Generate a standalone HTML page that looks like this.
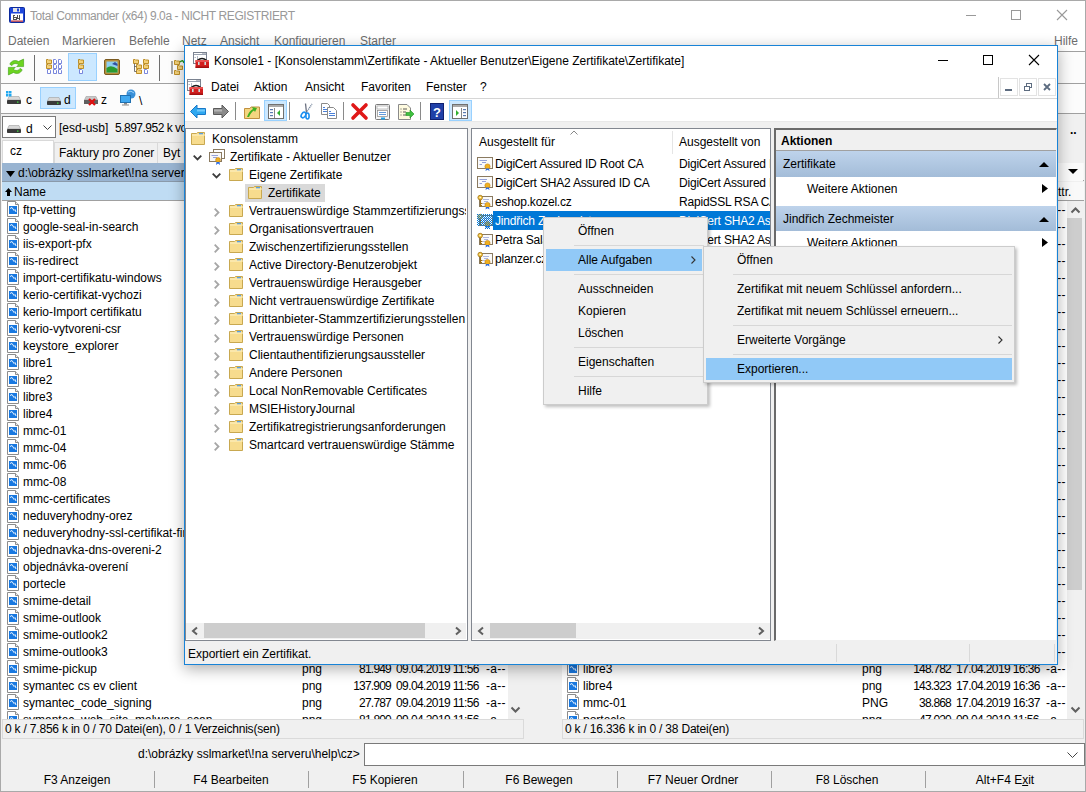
<!DOCTYPE html><html><head><meta charset="utf-8"><style>
html,body{margin:0;padding:0}
body{width:1086px;height:792px;overflow:hidden;position:relative;background:#f0f0f0;font-family:"Liberation Sans",sans-serif;font-size:12px;color:#000}
div{position:absolute;box-sizing:border-box}
.t{white-space:pre;line-height:14px}
svg{overflow:visible}
</style></head><body>
<div style="left:0px;top:0px;width:1086px;height:792px;background:#f0f0f0;border:1px solid #a9a9a9"></div>
<div style="left:1px;top:1px;width:1084px;height:30px;background:#fff"></div>
<div style="left:1px;top:31px;width:1084px;height:20px;background:#fff"></div>
<div style="left:1px;top:51px;width:1084px;height:1px;background:#a0a0a0"></div>
<div style="left:1px;top:52px;width:1084px;height:31px;background:#fcfcfc"></div>
<div style="left:1px;top:83px;width:1084px;height:1px;background:#a0a0a0"></div>
<div style="left:1px;top:84px;width:1084px;height:29px;background:#fcfcfc"></div>
<div style="left:1px;top:113px;width:1084px;height:1px;background:#a0a0a0"></div>
<svg style="position:absolute;left:9px;top:7px" width="16" height="16" viewBox="0 0 16 16"><rect x="0.5" y="0.5" width="15" height="15" rx="1" fill="#1f48dc" stroke="#0c2a9c"/><rect x="4" y="1" width="7" height="4" fill="#e4e4e4"/><rect x="8" y="1.5" width="2" height="3" fill="#1f48dc"/><rect x="2" y="6.5" width="12" height="8" fill="#fff"/><rect x="2" y="13.5" width="12" height="1.2" fill="#c03030"/><g shape-rendering="crispEdges" stroke="#505050" stroke-width="1" fill="none"><path d="M6,8.5H4.5V12.5H7V10.5H4.5M8.5,8V11H11M10.5,8V13"/></g></svg>
<div class="t" style="left:30px;top:9px;font-size:12px;color:#999;letter-spacing:-0.4px">Total Commander (x64) 9.0a - NICHT REGISTRIERT</div>
<svg style="position:absolute;left:966px;top:15px" width="10" height="1" viewBox="0 0 10 1"><rect x="0" y="0" width="10" height="1" fill="#999"/></svg>
<svg style="position:absolute;left:1011px;top:10px" width="10" height="10" viewBox="0 0 10 10"><rect x="0.5" y="0.5" width="9" height="9" fill="none" stroke="#999"/></svg>
<svg style="position:absolute;left:1057px;top:10px" width="10" height="10" viewBox="0 0 10 10"><path d="M0,0L10,10M10,0L0,10" stroke="#999" stroke-width="1.1"/></svg>
<div class="t" style="left:8px;top:34px;font-size:12px;color:#6d6d6d">Dateien</div>
<div class="t" style="left:62px;top:34px;font-size:12px;color:#6d6d6d">Markieren</div>
<div class="t" style="left:129px;top:34px;font-size:12px;color:#6d6d6d">Befehle</div>
<div class="t" style="left:182px;top:34px;font-size:12px;color:#6d6d6d">Netz</div>
<div class="t" style="left:220px;top:34px;font-size:12px;color:#6d6d6d">Ansicht</div>
<div class="t" style="left:274px;top:34px;font-size:12px;color:#6d6d6d">Konfigurieren</div>
<div class="t" style="left:360px;top:34px;font-size:12px;color:#6d6d6d">Starter</div>
<div class="t" style="left:1054px;top:34px;font-size:12px;color:#6d6d6d">Hilfe</div>
<div style="left:68px;top:53px;width:29px;height:28px;background:#cce8ff;border:1px solid #99d1ff"></div>
<div style="left:34px;top:55px;width:1px;height:26px;background:#6e6e6e"></div>
<div style="left:159px;top:55px;width:1px;height:26px;background:#6e6e6e"></div>
<svg style="position:absolute;left:8px;top:59px" width="16" height="16" viewBox="0 0 16 16"><g fill="#6cd420" stroke="#3c9c12" stroke-width="0.6" stroke-linejoin="miter"><path d="M1.8,5.2 C3.5,1.5 7,0.6 10.5,2.5 L15.6,0.1 L15.6,7.6 L8.6,7.6 L10.8,5.8 C8.5,3.9 5.5,4.1 3.9,6.6 Z"/><path d="M14.2,10.8 C12.5,14.5 9,15.4 5.5,13.5 L0.4,15.9 L0.4,8.4 L7.4,8.4 L5.2,10.2 C7.5,12.1 10.5,11.9 12.1,9.4 Z"/></g></svg>
<svg style="position:absolute;left:46px;top:59px" width="16" height="16" viewBox="0 0 16 16"><path d="M0.5,0.5 H2 L2.5,1 H5.5 V4.5 H0.5 Z" fill="#f4d27a" stroke="#b8861a" stroke-width="0.9"/><path d="M0.5,5.5 H2 L2.5,6 H5.5 V9.5 H0.5 Z" fill="#f4d27a" stroke="#b8861a" stroke-width="0.9"/><path d="M1.5,10.5 H3.5 L4.5,11.5 V14.5 H1.5 Z" fill="#fff" stroke="#6a78d8" stroke-width="0.9"/><path d="M7.5,0.5 H9.5 L10.5,1.5 V4.5 H7.5 Z" fill="#fff" stroke="#6a78d8" stroke-width="0.9"/><path d="M7.5,5.5 H9.5 L10.5,6.5 V9.5 H7.5 Z" fill="#fff" stroke="#6a78d8" stroke-width="0.9"/><path d="M7.5,10.5 H9.5 L10.5,11.5 V14.5 H7.5 Z" fill="#fff" stroke="#6a78d8" stroke-width="0.9"/><path d="M12.5,0.5 H14.5 L15.5,1.5 V4.5 H12.5 Z" fill="#fff" stroke="#6a78d8" stroke-width="0.9"/><path d="M12.5,5.5 H14.5 L15.5,6.5 V9.5 H12.5 Z" fill="#fff" stroke="#6a78d8" stroke-width="0.9"/><path d="M12.5,10.5 H14.5 L15.5,11.5 V14.5 H12.5 Z" fill="#fff" stroke="#6a78d8" stroke-width="0.9"/></svg>
<svg style="position:absolute;left:78px;top:59px" width="8" height="16" viewBox="0 0 8 16"><path d="M0.5,0.5 H2 L2.5,1 H5.5 V4.5 H0.5 Z" fill="#f4d27a" stroke="#b8861a" stroke-width="0.9"/><path d="M0.5,5.5 H2 L2.5,6 H5.5 V9.5 H0.5 Z" fill="#f4d27a" stroke="#b8861a" stroke-width="0.9"/><path d="M1.5,10.5 H3.5 L4.5,11.5 V14.5 H1.5 Z" fill="#fff" stroke="#6a78d8" stroke-width="0.9"/></svg>
<svg style="position:absolute;left:104px;top:59px" width="16" height="16" viewBox="0 0 16 16"><rect x="0.5" y="0.5" width="15" height="15" rx="1.5" fill="#b8903a" stroke="#7a5a20"/><rect x="2.5" y="2.5" width="11" height="11" fill="#8fd0f0"/><path d="M2.5,13.5 L2.5,9 Q7,5 13.5,10 L13.5,13.5Z" fill="#2a9a30"/><path d="M8,5 L11,3 L13.5,5 L13.5,7Z" fill="#3050a0"/></svg>
<svg style="position:absolute;left:133px;top:59px" width="16" height="16" viewBox="0 0 16 16"><path d="M0.5,0.5 H2 L2.5,1 H5.5 V4.5 H0.5 Z" fill="#f4d27a" stroke="#b8861a" stroke-width="0.9"/><path d="M3.5,5.5 H5 L5.5,6 H8.5 V9.5 H3.5 Z" fill="#f4d27a" stroke="#b8861a" stroke-width="0.9"/><path d="M3.5,10.5 H5 L5.5,11 H8.5 V14.5 H3.5 Z" fill="#f4d27a" stroke="#b8861a" stroke-width="0.9"/><path d="M1.5,4.5V12.5H3.5M1.5,7.5H3.5" stroke="#555" fill="none" stroke-width="0.8"/><path d="M10.5,0.5 H12 L12.5,1 H15.5 V4.5 H10.5 Z" fill="#f4d27a" stroke="#b8861a" stroke-width="0.9"/><path d="M10.5,5.5 H12 L12.5,6 H15.5 V9.5 H10.5 Z" fill="#f4d27a" stroke="#b8861a" stroke-width="0.9"/><path d="M11.5,10.5 H13.5 L14.5,11.5 V14.5 H11.5 Z" fill="#fff" stroke="#6a78d8" stroke-width="0.9"/></svg>
<svg style="position:absolute;left:171px;top:59px" width="14" height="16" viewBox="0 0 14 16"><path d="M1,2V15" stroke="#555" stroke-width="1"/><path d="M3.5,1.5 H5 L5.5,2 H8.5 V5.5 H3.5 Z" fill="#f4d27a" stroke="#b8861a" stroke-width="0.9"/><path d="M6.5,6.5 H8 L8.5,7 H11.5 V10.5 H6.5 Z" fill="#f4d27a" stroke="#b8861a" stroke-width="0.9"/><path d="M3.5,11.5 H5 L5.5,12 H8.5 V15.5 H3.5 Z" fill="#f4d27a" stroke="#b8861a" stroke-width="0.9"/><path d="M9,3 Q12,0 13,4" stroke="#2a9a20" stroke-width="1.5" fill="none"/></svg>
<div style="left:40px;top:87px;width:36px;height:22px;background:#cce8ff;border:1px solid #99d1ff"></div>
<svg style="position:absolute;left:6px;top:91px" width="16" height="16" viewBox="0 0 16 16"><path d="M1.5,9 L3,5.5 H13 L14.5,9Z" fill="#d8d8d8" stroke="#a0a0a0" stroke-width="0.6"/><rect x="1" y="9" width="14" height="4" rx="0.8" fill="#3a3a3a"/><rect x="11" y="10.5" width="1.5" height="1.2" fill="#40e040"/><rect x="0" y="0" width="2.5" height="2.5" fill="#20a8f0"/><rect x="3" y="0" width="2.5" height="2.5" fill="#20a8f0"/><rect x="0" y="3" width="2.5" height="2.5" fill="#20a8f0"/><rect x="3" y="3" width="2.5" height="2.5" fill="#20a8f0"/></svg>
<div class="t" style="left:26px;top:93px;font-size:12px;">c</div>
<svg style="position:absolute;left:46px;top:92px" width="16" height="16" viewBox="0 0 16 16"><path d="M1.5,9 L3,5.5 H13 L14.5,9Z" fill="#d8d8d8" stroke="#a0a0a0" stroke-width="0.6"/><rect x="1" y="9" width="14" height="4" rx="0.8" fill="#3a3a3a"/><rect x="11" y="10.5" width="1.5" height="1.2" fill="#40e040"/></svg>
<div class="t" style="left:64px;top:93px;font-size:12px;">d</div>
<svg style="position:absolute;left:83px;top:91px" width="16" height="16" viewBox="0 0 16 16"><path d="M1.5,9 L3,5.5 H13 L14.5,9Z" fill="#c8c8c8" stroke="#a0a0a0" stroke-width="0.6"/><rect x="1" y="9" width="14" height="4" fill="#606060"/><path d="M6,8 L12,14 M12,8 L6,14" stroke="#e01010" stroke-width="2.2"/></svg>
<div class="t" style="left:101px;top:93px;font-size:12px;">z</div>
<svg style="position:absolute;left:120px;top:89px" width="16" height="18" viewBox="0 0 16 18"><circle cx="11" cy="5" r="4.5" fill="#3a90d8"/><path d="M8,3 Q11,1 14,4" stroke="#9ad0f8" fill="none"/><rect x="0.5" y="6.5" width="10" height="7" fill="#40a8f0" stroke="#2070b0"/><rect x="4" y="14" width="3" height="1.5" fill="#888"/><rect x="2" y="15.5" width="7" height="1" fill="#888"/></svg>
<div class="t" style="left:139px;top:94px;font-size:12px;">\</div>
<div style="left:2px;top:116px;width:54px;height:22px;background:#fff;border:1px solid #7a7a7a"></div>
<svg style="position:absolute;left:6px;top:120px" width="16" height="16" viewBox="0 0 16 16"><path d="M1.5,9 L3,5.5 H13 L14.5,9Z" fill="#d8d8d8" stroke="#a0a0a0" stroke-width="0.6"/><rect x="1" y="9" width="14" height="4" rx="0.8" fill="#3a3a3a"/><rect x="11" y="10.5" width="1.5" height="1.2" fill="#40e040"/></svg>
<div class="t" style="left:26px;top:122px;font-size:12px;">d</div>
<svg style="position:absolute;left:43px;top:125px" width="9" height="5" viewBox="0 0 9 5"><path d="M0.5,0.5 L4.5,4.5 L8.5,0.5" stroke="#444" fill="none" stroke-width="1"/></svg>
<div class="t" style="left:59px;top:121px;font-size:12px;">[esd-usb]</div>
<div class="t" style="left:115px;top:121px;font-size:12px;letter-spacing:-0.5px">5.897.952 k von 30.518.652 k frei</div>
<div class="t" style="left:1070px;top:123px;font-size:12px;font-weight:bold">..</div>
<div style="left:2px;top:140px;width:52px;height:23px;background:#fff;border:1px solid #d9d9d9;border-bottom:none"></div>
<div class="t" style="left:10px;top:144px;font-size:12px;">cz</div>
<div style="left:54px;top:142px;width:104px;height:21px;background:#f0f0f0;border:1px solid #d9d9d9;border-bottom:none"></div>
<div class="t" style="left:59px;top:146px;font-size:12px;">Faktury pro Zoner</div>
<div style="left:157px;top:142px;width:60px;height:21px;background:#f0f0f0;border:1px solid #d9d9d9;border-bottom:none"></div>
<div class="t" style="left:163px;top:146px;font-size:12px;">Byt</div>
<div style="left:2px;top:163px;width:522px;height:18px;background:#99b4d1"></div>
<div style="left:2px;top:181px;width:522px;height:1px;background:#8a9aaa"></div>
<svg style="position:absolute;left:6px;top:171px" width="9" height="6" viewBox="0 0 9 6"><path d="M0,0H9L4.5,6Z" fill="#000"/></svg>
<div class="t" style="left:18px;top:166px;font-size:12px;">d:\obrázky sslmarket\!na serveru\help\cz\*.*</div>
<div style="left:2px;top:182px;width:522px;height:18px;background:#bfdcf3"></div>
<div style="left:2px;top:200px;width:522px;height:1px;background:#a0a0a0"></div>
<svg style="position:absolute;left:5px;top:188px" width="7" height="8" viewBox="0 0 7 8"><path d="M3.5,0 L7,4 H5 V8 H2 V4 H0Z" fill="#000"/></svg>
<div class="t" style="left:14px;top:185px;font-size:12px;">Name</div>
<div style="left:2px;top:201px;width:506px;height:518px;background:#fff"></div>
<div style="left:2px;top:201px;width:506px;height:518px;overflow:hidden">
<svg style="position:absolute;left:5px;top:0px" width="12" height="16" viewBox="0 0 12 16"><path d="M0.5,0.5 H8.5 L11.5,3.5 V15.5 H0.5Z" fill="#fff" stroke="#8c8c8c"/><path d="M8.5,0.5 V3.5 H11.5" fill="#eee" stroke="#8c8c8c"/><rect x="2" y="5" width="8" height="8" fill="#1878e0"/><path d="M3,7.5 L5,6.5 L7,9.5 L8,8.5 L9,11" stroke="#e8f4ff" stroke-width="1" fill="none"/></svg>
<div class="t" style="left:21px;top:2px">ftp-vetting</div>
<svg style="position:absolute;left:5px;top:17px" width="12" height="16" viewBox="0 0 12 16"><path d="M0.5,0.5 H8.5 L11.5,3.5 V15.5 H0.5Z" fill="#fff" stroke="#8c8c8c"/><path d="M8.5,0.5 V3.5 H11.5" fill="#eee" stroke="#8c8c8c"/><rect x="2" y="5" width="8" height="8" fill="#1878e0"/><path d="M3,7.5 L5,6.5 L7,9.5 L8,8.5 L9,11" stroke="#e8f4ff" stroke-width="1" fill="none"/></svg>
<div class="t" style="left:21px;top:19px">google-seal-in-search</div>
<svg style="position:absolute;left:5px;top:34px" width="12" height="16" viewBox="0 0 12 16"><path d="M0.5,0.5 H8.5 L11.5,3.5 V15.5 H0.5Z" fill="#fff" stroke="#8c8c8c"/><path d="M8.5,0.5 V3.5 H11.5" fill="#eee" stroke="#8c8c8c"/><rect x="2" y="5" width="8" height="8" fill="#1878e0"/><path d="M3,7.5 L5,6.5 L7,9.5 L8,8.5 L9,11" stroke="#e8f4ff" stroke-width="1" fill="none"/></svg>
<div class="t" style="left:21px;top:36px">iis-export-pfx</div>
<svg style="position:absolute;left:5px;top:51px" width="12" height="16" viewBox="0 0 12 16"><path d="M0.5,0.5 H8.5 L11.5,3.5 V15.5 H0.5Z" fill="#fff" stroke="#8c8c8c"/><path d="M8.5,0.5 V3.5 H11.5" fill="#eee" stroke="#8c8c8c"/><rect x="2" y="5" width="8" height="8" fill="#1878e0"/><path d="M3,7.5 L5,6.5 L7,9.5 L8,8.5 L9,11" stroke="#e8f4ff" stroke-width="1" fill="none"/></svg>
<div class="t" style="left:21px;top:53px">iis-redirect</div>
<svg style="position:absolute;left:5px;top:68px" width="12" height="16" viewBox="0 0 12 16"><path d="M0.5,0.5 H8.5 L11.5,3.5 V15.5 H0.5Z" fill="#fff" stroke="#8c8c8c"/><path d="M8.5,0.5 V3.5 H11.5" fill="#eee" stroke="#8c8c8c"/><rect x="2" y="5" width="8" height="8" fill="#1878e0"/><path d="M3,7.5 L5,6.5 L7,9.5 L8,8.5 L9,11" stroke="#e8f4ff" stroke-width="1" fill="none"/></svg>
<div class="t" style="left:21px;top:70px">import-certifikatu-windows</div>
<svg style="position:absolute;left:5px;top:85px" width="12" height="16" viewBox="0 0 12 16"><path d="M0.5,0.5 H8.5 L11.5,3.5 V15.5 H0.5Z" fill="#fff" stroke="#8c8c8c"/><path d="M8.5,0.5 V3.5 H11.5" fill="#eee" stroke="#8c8c8c"/><rect x="2" y="5" width="8" height="8" fill="#1878e0"/><path d="M3,7.5 L5,6.5 L7,9.5 L8,8.5 L9,11" stroke="#e8f4ff" stroke-width="1" fill="none"/></svg>
<div class="t" style="left:21px;top:87px">kerio-certifikat-vychozi</div>
<svg style="position:absolute;left:5px;top:102px" width="12" height="16" viewBox="0 0 12 16"><path d="M0.5,0.5 H8.5 L11.5,3.5 V15.5 H0.5Z" fill="#fff" stroke="#8c8c8c"/><path d="M8.5,0.5 V3.5 H11.5" fill="#eee" stroke="#8c8c8c"/><rect x="2" y="5" width="8" height="8" fill="#1878e0"/><path d="M3,7.5 L5,6.5 L7,9.5 L8,8.5 L9,11" stroke="#e8f4ff" stroke-width="1" fill="none"/></svg>
<div class="t" style="left:21px;top:104px">kerio-Import certifikatu</div>
<svg style="position:absolute;left:5px;top:119px" width="12" height="16" viewBox="0 0 12 16"><path d="M0.5,0.5 H8.5 L11.5,3.5 V15.5 H0.5Z" fill="#fff" stroke="#8c8c8c"/><path d="M8.5,0.5 V3.5 H11.5" fill="#eee" stroke="#8c8c8c"/><rect x="2" y="5" width="8" height="8" fill="#1878e0"/><path d="M3,7.5 L5,6.5 L7,9.5 L8,8.5 L9,11" stroke="#e8f4ff" stroke-width="1" fill="none"/></svg>
<div class="t" style="left:21px;top:121px">kerio-vytvoreni-csr</div>
<svg style="position:absolute;left:5px;top:136px" width="12" height="16" viewBox="0 0 12 16"><path d="M0.5,0.5 H8.5 L11.5,3.5 V15.5 H0.5Z" fill="#fff" stroke="#8c8c8c"/><path d="M8.5,0.5 V3.5 H11.5" fill="#eee" stroke="#8c8c8c"/><rect x="2" y="5" width="8" height="8" fill="#1878e0"/><path d="M3,7.5 L5,6.5 L7,9.5 L8,8.5 L9,11" stroke="#e8f4ff" stroke-width="1" fill="none"/></svg>
<div class="t" style="left:21px;top:138px">keystore_explorer</div>
<svg style="position:absolute;left:5px;top:153px" width="12" height="16" viewBox="0 0 12 16"><path d="M0.5,0.5 H8.5 L11.5,3.5 V15.5 H0.5Z" fill="#fff" stroke="#8c8c8c"/><path d="M8.5,0.5 V3.5 H11.5" fill="#eee" stroke="#8c8c8c"/><rect x="2" y="5" width="8" height="8" fill="#1878e0"/><path d="M3,7.5 L5,6.5 L7,9.5 L8,8.5 L9,11" stroke="#e8f4ff" stroke-width="1" fill="none"/></svg>
<div class="t" style="left:21px;top:155px">libre1</div>
<svg style="position:absolute;left:5px;top:170px" width="12" height="16" viewBox="0 0 12 16"><path d="M0.5,0.5 H8.5 L11.5,3.5 V15.5 H0.5Z" fill="#fff" stroke="#8c8c8c"/><path d="M8.5,0.5 V3.5 H11.5" fill="#eee" stroke="#8c8c8c"/><rect x="2" y="5" width="8" height="8" fill="#1878e0"/><path d="M3,7.5 L5,6.5 L7,9.5 L8,8.5 L9,11" stroke="#e8f4ff" stroke-width="1" fill="none"/></svg>
<div class="t" style="left:21px;top:172px">libre2</div>
<svg style="position:absolute;left:5px;top:187px" width="12" height="16" viewBox="0 0 12 16"><path d="M0.5,0.5 H8.5 L11.5,3.5 V15.5 H0.5Z" fill="#fff" stroke="#8c8c8c"/><path d="M8.5,0.5 V3.5 H11.5" fill="#eee" stroke="#8c8c8c"/><rect x="2" y="5" width="8" height="8" fill="#1878e0"/><path d="M3,7.5 L5,6.5 L7,9.5 L8,8.5 L9,11" stroke="#e8f4ff" stroke-width="1" fill="none"/></svg>
<div class="t" style="left:21px;top:189px">libre3</div>
<svg style="position:absolute;left:5px;top:204px" width="12" height="16" viewBox="0 0 12 16"><path d="M0.5,0.5 H8.5 L11.5,3.5 V15.5 H0.5Z" fill="#fff" stroke="#8c8c8c"/><path d="M8.5,0.5 V3.5 H11.5" fill="#eee" stroke="#8c8c8c"/><rect x="2" y="5" width="8" height="8" fill="#1878e0"/><path d="M3,7.5 L5,6.5 L7,9.5 L8,8.5 L9,11" stroke="#e8f4ff" stroke-width="1" fill="none"/></svg>
<div class="t" style="left:21px;top:206px">libre4</div>
<svg style="position:absolute;left:5px;top:221px" width="12" height="16" viewBox="0 0 12 16"><path d="M0.5,0.5 H8.5 L11.5,3.5 V15.5 H0.5Z" fill="#fff" stroke="#8c8c8c"/><path d="M8.5,0.5 V3.5 H11.5" fill="#eee" stroke="#8c8c8c"/><rect x="2" y="5" width="8" height="8" fill="#1878e0"/><path d="M3,7.5 L5,6.5 L7,9.5 L8,8.5 L9,11" stroke="#e8f4ff" stroke-width="1" fill="none"/></svg>
<div class="t" style="left:21px;top:223px">mmc-01</div>
<svg style="position:absolute;left:5px;top:238px" width="12" height="16" viewBox="0 0 12 16"><path d="M0.5,0.5 H8.5 L11.5,3.5 V15.5 H0.5Z" fill="#fff" stroke="#8c8c8c"/><path d="M8.5,0.5 V3.5 H11.5" fill="#eee" stroke="#8c8c8c"/><rect x="2" y="5" width="8" height="8" fill="#1878e0"/><path d="M3,7.5 L5,6.5 L7,9.5 L8,8.5 L9,11" stroke="#e8f4ff" stroke-width="1" fill="none"/></svg>
<div class="t" style="left:21px;top:240px">mmc-04</div>
<svg style="position:absolute;left:5px;top:255px" width="12" height="16" viewBox="0 0 12 16"><path d="M0.5,0.5 H8.5 L11.5,3.5 V15.5 H0.5Z" fill="#fff" stroke="#8c8c8c"/><path d="M8.5,0.5 V3.5 H11.5" fill="#eee" stroke="#8c8c8c"/><rect x="2" y="5" width="8" height="8" fill="#1878e0"/><path d="M3,7.5 L5,6.5 L7,9.5 L8,8.5 L9,11" stroke="#e8f4ff" stroke-width="1" fill="none"/></svg>
<div class="t" style="left:21px;top:257px">mmc-06</div>
<svg style="position:absolute;left:5px;top:272px" width="12" height="16" viewBox="0 0 12 16"><path d="M0.5,0.5 H8.5 L11.5,3.5 V15.5 H0.5Z" fill="#fff" stroke="#8c8c8c"/><path d="M8.5,0.5 V3.5 H11.5" fill="#eee" stroke="#8c8c8c"/><rect x="2" y="5" width="8" height="8" fill="#1878e0"/><path d="M3,7.5 L5,6.5 L7,9.5 L8,8.5 L9,11" stroke="#e8f4ff" stroke-width="1" fill="none"/></svg>
<div class="t" style="left:21px;top:274px">mmc-08</div>
<svg style="position:absolute;left:5px;top:289px" width="12" height="16" viewBox="0 0 12 16"><path d="M0.5,0.5 H8.5 L11.5,3.5 V15.5 H0.5Z" fill="#fff" stroke="#8c8c8c"/><path d="M8.5,0.5 V3.5 H11.5" fill="#eee" stroke="#8c8c8c"/><rect x="2" y="5" width="8" height="8" fill="#1878e0"/><path d="M3,7.5 L5,6.5 L7,9.5 L8,8.5 L9,11" stroke="#e8f4ff" stroke-width="1" fill="none"/></svg>
<div class="t" style="left:21px;top:291px">mmc-certificates</div>
<svg style="position:absolute;left:5px;top:306px" width="12" height="16" viewBox="0 0 12 16"><path d="M0.5,0.5 H8.5 L11.5,3.5 V15.5 H0.5Z" fill="#fff" stroke="#8c8c8c"/><path d="M8.5,0.5 V3.5 H11.5" fill="#eee" stroke="#8c8c8c"/><rect x="2" y="5" width="8" height="8" fill="#1878e0"/><path d="M3,7.5 L5,6.5 L7,9.5 L8,8.5 L9,11" stroke="#e8f4ff" stroke-width="1" fill="none"/></svg>
<div class="t" style="left:21px;top:308px">neduveryhodny-orez</div>
<svg style="position:absolute;left:5px;top:323px" width="12" height="16" viewBox="0 0 12 16"><path d="M0.5,0.5 H8.5 L11.5,3.5 V15.5 H0.5Z" fill="#fff" stroke="#8c8c8c"/><path d="M8.5,0.5 V3.5 H11.5" fill="#eee" stroke="#8c8c8c"/><rect x="2" y="5" width="8" height="8" fill="#1878e0"/><path d="M3,7.5 L5,6.5 L7,9.5 L8,8.5 L9,11" stroke="#e8f4ff" stroke-width="1" fill="none"/></svg>
<div class="t" style="left:21px;top:325px">neduveryhodny-ssl-certifikat-firefox</div>
<svg style="position:absolute;left:5px;top:340px" width="12" height="16" viewBox="0 0 12 16"><path d="M0.5,0.5 H8.5 L11.5,3.5 V15.5 H0.5Z" fill="#fff" stroke="#8c8c8c"/><path d="M8.5,0.5 V3.5 H11.5" fill="#eee" stroke="#8c8c8c"/><rect x="2" y="5" width="8" height="8" fill="#1878e0"/><path d="M3,7.5 L5,6.5 L7,9.5 L8,8.5 L9,11" stroke="#e8f4ff" stroke-width="1" fill="none"/></svg>
<div class="t" style="left:21px;top:342px">objednavka-dns-overeni-2</div>
<svg style="position:absolute;left:5px;top:357px" width="12" height="16" viewBox="0 0 12 16"><path d="M0.5,0.5 H8.5 L11.5,3.5 V15.5 H0.5Z" fill="#fff" stroke="#8c8c8c"/><path d="M8.5,0.5 V3.5 H11.5" fill="#eee" stroke="#8c8c8c"/><rect x="2" y="5" width="8" height="8" fill="#1878e0"/><path d="M3,7.5 L5,6.5 L7,9.5 L8,8.5 L9,11" stroke="#e8f4ff" stroke-width="1" fill="none"/></svg>
<div class="t" style="left:21px;top:359px">objednávka-overení</div>
<svg style="position:absolute;left:5px;top:374px" width="12" height="16" viewBox="0 0 12 16"><path d="M0.5,0.5 H8.5 L11.5,3.5 V15.5 H0.5Z" fill="#fff" stroke="#8c8c8c"/><path d="M8.5,0.5 V3.5 H11.5" fill="#eee" stroke="#8c8c8c"/><rect x="2" y="5" width="8" height="8" fill="#1878e0"/><path d="M3,7.5 L5,6.5 L7,9.5 L8,8.5 L9,11" stroke="#e8f4ff" stroke-width="1" fill="none"/></svg>
<div class="t" style="left:21px;top:376px">portecle</div>
<svg style="position:absolute;left:5px;top:391px" width="12" height="16" viewBox="0 0 12 16"><path d="M0.5,0.5 H8.5 L11.5,3.5 V15.5 H0.5Z" fill="#fff" stroke="#8c8c8c"/><path d="M8.5,0.5 V3.5 H11.5" fill="#eee" stroke="#8c8c8c"/><rect x="2" y="5" width="8" height="8" fill="#1878e0"/><path d="M3,7.5 L5,6.5 L7,9.5 L8,8.5 L9,11" stroke="#e8f4ff" stroke-width="1" fill="none"/></svg>
<div class="t" style="left:21px;top:393px">smime-detail</div>
<svg style="position:absolute;left:5px;top:408px" width="12" height="16" viewBox="0 0 12 16"><path d="M0.5,0.5 H8.5 L11.5,3.5 V15.5 H0.5Z" fill="#fff" stroke="#8c8c8c"/><path d="M8.5,0.5 V3.5 H11.5" fill="#eee" stroke="#8c8c8c"/><rect x="2" y="5" width="8" height="8" fill="#1878e0"/><path d="M3,7.5 L5,6.5 L7,9.5 L8,8.5 L9,11" stroke="#e8f4ff" stroke-width="1" fill="none"/></svg>
<div class="t" style="left:21px;top:410px">smime-outlook</div>
<svg style="position:absolute;left:5px;top:425px" width="12" height="16" viewBox="0 0 12 16"><path d="M0.5,0.5 H8.5 L11.5,3.5 V15.5 H0.5Z" fill="#fff" stroke="#8c8c8c"/><path d="M8.5,0.5 V3.5 H11.5" fill="#eee" stroke="#8c8c8c"/><rect x="2" y="5" width="8" height="8" fill="#1878e0"/><path d="M3,7.5 L5,6.5 L7,9.5 L8,8.5 L9,11" stroke="#e8f4ff" stroke-width="1" fill="none"/></svg>
<div class="t" style="left:21px;top:427px">smime-outlook2</div>
<svg style="position:absolute;left:5px;top:442px" width="12" height="16" viewBox="0 0 12 16"><path d="M0.5,0.5 H8.5 L11.5,3.5 V15.5 H0.5Z" fill="#fff" stroke="#8c8c8c"/><path d="M8.5,0.5 V3.5 H11.5" fill="#eee" stroke="#8c8c8c"/><rect x="2" y="5" width="8" height="8" fill="#1878e0"/><path d="M3,7.5 L5,6.5 L7,9.5 L8,8.5 L9,11" stroke="#e8f4ff" stroke-width="1" fill="none"/></svg>
<div class="t" style="left:21px;top:444px">smime-outlook3</div>
<svg style="position:absolute;left:5px;top:459px" width="12" height="16" viewBox="0 0 12 16"><path d="M0.5,0.5 H8.5 L11.5,3.5 V15.5 H0.5Z" fill="#fff" stroke="#8c8c8c"/><path d="M8.5,0.5 V3.5 H11.5" fill="#eee" stroke="#8c8c8c"/><rect x="2" y="5" width="8" height="8" fill="#1878e0"/><path d="M3,7.5 L5,6.5 L7,9.5 L8,8.5 L9,11" stroke="#e8f4ff" stroke-width="1" fill="none"/></svg>
<div class="t" style="left:21px;top:461px">smime-pickup</div>
<div class="t" style="left:300px;top:461px">png</div>
<div class="t" style="left:320px;width:69px;text-align:right;top:461px;letter-spacing:-0.8px">81.949</div>
<div class="t" style="left:394px;top:461px;letter-spacing:-0.6px">09.04.2019 11:56</div>
<div class="t" style="left:484px;top:461px;letter-spacing:0.3px">-a--</div>
<svg style="position:absolute;left:5px;top:476px" width="12" height="16" viewBox="0 0 12 16"><path d="M0.5,0.5 H8.5 L11.5,3.5 V15.5 H0.5Z" fill="#fff" stroke="#8c8c8c"/><path d="M8.5,0.5 V3.5 H11.5" fill="#eee" stroke="#8c8c8c"/><rect x="2" y="5" width="8" height="8" fill="#1878e0"/><path d="M3,7.5 L5,6.5 L7,9.5 L8,8.5 L9,11" stroke="#e8f4ff" stroke-width="1" fill="none"/></svg>
<div class="t" style="left:21px;top:478px">symantec cs ev client</div>
<div class="t" style="left:300px;top:478px">png</div>
<div class="t" style="left:320px;width:69px;text-align:right;top:478px;letter-spacing:-0.8px">137.909</div>
<div class="t" style="left:394px;top:478px;letter-spacing:-0.6px">09.04.2019 11:56</div>
<div class="t" style="left:484px;top:478px;letter-spacing:0.3px">-a--</div>
<svg style="position:absolute;left:5px;top:493px" width="12" height="16" viewBox="0 0 12 16"><path d="M0.5,0.5 H8.5 L11.5,3.5 V15.5 H0.5Z" fill="#fff" stroke="#8c8c8c"/><path d="M8.5,0.5 V3.5 H11.5" fill="#eee" stroke="#8c8c8c"/><rect x="2" y="5" width="8" height="8" fill="#1878e0"/><path d="M3,7.5 L5,6.5 L7,9.5 L8,8.5 L9,11" stroke="#e8f4ff" stroke-width="1" fill="none"/></svg>
<div class="t" style="left:21px;top:495px">symantec_code_signing</div>
<div class="t" style="left:300px;top:495px">png</div>
<div class="t" style="left:320px;width:69px;text-align:right;top:495px;letter-spacing:-0.8px">27.787</div>
<div class="t" style="left:394px;top:495px;letter-spacing:-0.6px">09.04.2019 11:56</div>
<div class="t" style="left:484px;top:495px;letter-spacing:0.3px">-a--</div>
<svg style="position:absolute;left:5px;top:510px" width="12" height="16" viewBox="0 0 12 16"><path d="M0.5,0.5 H8.5 L11.5,3.5 V15.5 H0.5Z" fill="#fff" stroke="#8c8c8c"/><path d="M8.5,0.5 V3.5 H11.5" fill="#eee" stroke="#8c8c8c"/><rect x="2" y="5" width="8" height="8" fill="#1878e0"/><path d="M3,7.5 L5,6.5 L7,9.5 L8,8.5 L9,11" stroke="#e8f4ff" stroke-width="1" fill="none"/></svg>
<div class="t" style="left:21px;top:512px">symantec_web_site_malware_scan</div>
<div class="t" style="left:300px;top:512px">png</div>
<div class="t" style="left:320px;width:69px;text-align:right;top:512px;letter-spacing:-0.8px">81.800</div>
<div class="t" style="left:394px;top:512px;letter-spacing:-0.6px">09.04.2019 11:56</div>
<div class="t" style="left:484px;top:512px;letter-spacing:0.3px">-a--</div>
</div>
<div style="left:508px;top:201px;width:16px;height:518px;background:#f0f0f0"></div>
<svg style="position:absolute;left:511px;top:707px" width="9" height="5" viewBox="0 0 9 5"><path d="M0.5,0.5 L4.5,4.5 L8.5,0.5" stroke="#606060" fill="none" stroke-width="2"/></svg>
<div style="left:2px;top:719px;width:522px;height:20px;background:#f0f0f0;border:1px solid #dadada"></div>
<div class="t" style="left:5px;top:722px;font-size:12px;letter-spacing:-0.2px">0 k / 7.856 k in 0 / 70 Datei(en), 0 / 1 Verzeichnis(sen)</div>
<div style="left:562px;top:163px;width:522px;height:18px;background:#f7f7f7;border-bottom:1px solid #a0a0a0"></div>
<div style="left:1058px;top:163px;width:25px;height:18px;background:#fafafa"></div>
<svg style="position:absolute;left:1068px;top:169px" width="10" height="5" viewBox="0 0 10 5"><path d="M0,0H10L5,5Z" fill="#000"/></svg>
<div style="left:562px;top:182px;width:522px;height:19px;background:#f9f9f9;border-bottom:1px solid #a0a0a0"></div>
<div class="t" style="left:1050px;top:185px;font-size:12px;">Attr.</div>
<div style="left:562px;top:201px;width:505px;height:518px;background:#fff"></div>
<div style="left:562px;top:201px;width:505px;height:518px;overflow:hidden">
<div class="t" style="left:484px;top:2px;letter-spacing:0.3px">-a--</div>
<div class="t" style="left:484px;top:19px;letter-spacing:0.3px">-a--</div>
<div class="t" style="left:484px;top:36px;letter-spacing:0.3px">-a--</div>
<div class="t" style="left:484px;top:53px;letter-spacing:0.3px">-a--</div>
<div class="t" style="left:484px;top:70px;letter-spacing:0.3px">-a--</div>
<div class="t" style="left:484px;top:87px;letter-spacing:0.3px">-a--</div>
<div class="t" style="left:484px;top:104px;letter-spacing:0.3px">-a--</div>
<div class="t" style="left:484px;top:121px;letter-spacing:0.3px">-a--</div>
<div class="t" style="left:484px;top:138px;letter-spacing:0.3px">-a--</div>
<div class="t" style="left:484px;top:155px;letter-spacing:0.3px">-a--</div>
<div class="t" style="left:484px;top:172px;letter-spacing:0.3px">-a--</div>
<div class="t" style="left:484px;top:189px;letter-spacing:0.3px">-a--</div>
<div class="t" style="left:484px;top:206px;letter-spacing:0.3px">-a--</div>
<div class="t" style="left:484px;top:223px;letter-spacing:0.3px">-a--</div>
<div class="t" style="left:484px;top:240px;letter-spacing:0.3px">-a--</div>
<div class="t" style="left:484px;top:257px;letter-spacing:0.3px">-a--</div>
<div class="t" style="left:484px;top:274px;letter-spacing:0.3px">-a--</div>
<div class="t" style="left:484px;top:291px;letter-spacing:0.3px">-a--</div>
<div class="t" style="left:484px;top:308px;letter-spacing:0.3px">-a--</div>
<div class="t" style="left:484px;top:325px;letter-spacing:0.3px">-a--</div>
<div class="t" style="left:484px;top:342px;letter-spacing:0.3px">-a--</div>
<div class="t" style="left:484px;top:359px;letter-spacing:0.3px">-a--</div>
<div class="t" style="left:484px;top:376px;letter-spacing:0.3px">-a--</div>
<div class="t" style="left:484px;top:393px;letter-spacing:0.3px">-a--</div>
<div class="t" style="left:484px;top:410px;letter-spacing:0.3px">-a--</div>
<div class="t" style="left:484px;top:427px;letter-spacing:0.3px">-a--</div>
<div class="t" style="left:484px;top:444px;letter-spacing:0.3px">-a--</div>
<svg style="position:absolute;left:5px;top:459px" width="12" height="16" viewBox="0 0 12 16"><path d="M0.5,0.5 H8.5 L11.5,3.5 V15.5 H0.5Z" fill="#fff" stroke="#8c8c8c"/><path d="M8.5,0.5 V3.5 H11.5" fill="#eee" stroke="#8c8c8c"/><rect x="2" y="5" width="8" height="8" fill="#1878e0"/><path d="M3,7.5 L5,6.5 L7,9.5 L8,8.5 L9,11" stroke="#e8f4ff" stroke-width="1" fill="none"/></svg>
<div class="t" style="left:21px;top:461px">libre3</div>
<div class="t" style="left:300px;top:461px">png</div>
<div class="t" style="left:320px;width:69px;text-align:right;top:461px;letter-spacing:-0.8px">148.782</div>
<div class="t" style="left:394px;top:461px;letter-spacing:-0.6px">17.04.2019 16:36</div>
<div class="t" style="left:484px;top:461px;letter-spacing:0.3px">-a--</div>
<svg style="position:absolute;left:5px;top:476px" width="12" height="16" viewBox="0 0 12 16"><path d="M0.5,0.5 H8.5 L11.5,3.5 V15.5 H0.5Z" fill="#fff" stroke="#8c8c8c"/><path d="M8.5,0.5 V3.5 H11.5" fill="#eee" stroke="#8c8c8c"/><rect x="2" y="5" width="8" height="8" fill="#1878e0"/><path d="M3,7.5 L5,6.5 L7,9.5 L8,8.5 L9,11" stroke="#e8f4ff" stroke-width="1" fill="none"/></svg>
<div class="t" style="left:21px;top:478px">libre4</div>
<div class="t" style="left:300px;top:478px">png</div>
<div class="t" style="left:320px;width:69px;text-align:right;top:478px;letter-spacing:-0.8px">143.323</div>
<div class="t" style="left:394px;top:478px;letter-spacing:-0.6px">17.04.2019 16:36</div>
<div class="t" style="left:484px;top:478px;letter-spacing:0.3px">-a--</div>
<svg style="position:absolute;left:5px;top:493px" width="12" height="16" viewBox="0 0 12 16"><path d="M0.5,0.5 H8.5 L11.5,3.5 V15.5 H0.5Z" fill="#fff" stroke="#8c8c8c"/><path d="M8.5,0.5 V3.5 H11.5" fill="#eee" stroke="#8c8c8c"/><rect x="2" y="5" width="8" height="8" fill="#1878e0"/><path d="M3,7.5 L5,6.5 L7,9.5 L8,8.5 L9,11" stroke="#e8f4ff" stroke-width="1" fill="none"/></svg>
<div class="t" style="left:21px;top:495px">mmc-01</div>
<div class="t" style="left:300px;top:495px">PNG</div>
<div class="t" style="left:320px;width:69px;text-align:right;top:495px;letter-spacing:-0.8px">38.868</div>
<div class="t" style="left:394px;top:495px;letter-spacing:-0.6px">17.04.2019 16:37</div>
<div class="t" style="left:484px;top:495px;letter-spacing:0.3px">-a--</div>
<svg style="position:absolute;left:5px;top:510px" width="12" height="16" viewBox="0 0 12 16"><path d="M0.5,0.5 H8.5 L11.5,3.5 V15.5 H0.5Z" fill="#fff" stroke="#8c8c8c"/><path d="M8.5,0.5 V3.5 H11.5" fill="#eee" stroke="#8c8c8c"/><rect x="2" y="5" width="8" height="8" fill="#1878e0"/><path d="M3,7.5 L5,6.5 L7,9.5 L8,8.5 L9,11" stroke="#e8f4ff" stroke-width="1" fill="none"/></svg>
<div class="t" style="left:21px;top:512px">portecle</div>
<div class="t" style="left:300px;top:512px">png</div>
<div class="t" style="left:320px;width:69px;text-align:right;top:512px;letter-spacing:-0.8px">47.020</div>
<div class="t" style="left:394px;top:512px;letter-spacing:-0.6px">09.04.2019 11:56</div>
<div class="t" style="left:484px;top:512px;letter-spacing:0.3px">-a--</div>
</div>
<div style="left:1067px;top:201px;width:16px;height:518px;background:#f0f0f0"></div>
<svg style="position:absolute;left:1071px;top:208px" width="9" height="5" viewBox="0 0 9 5"><path d="M0.5,4.5 L4.5,0.5 L8.5,4.5" stroke="#606060" fill="none" stroke-width="2"/></svg>
<div style="left:1067px;top:218px;width:15px;height:372px;background:#cdcdcd"></div>
<svg style="position:absolute;left:1071px;top:707px" width="9" height="5" viewBox="0 0 9 5"><path d="M0.5,0.5 L4.5,4.5 L8.5,0.5" stroke="#606060" fill="none" stroke-width="2"/></svg>
<div style="left:562px;top:719px;width:522px;height:20px;background:#f0f0f0;border:1px solid #dadada"></div>
<div class="t" style="left:565px;top:722px;font-size:12px;letter-spacing:-0.2px">0 k / 16.336 k in 0 / 38 Datei(en)</div>
<div class="t" style="left:138px;top:747px;font-size:12px;">d:\obrázky sslmarket\!na serveru\help\cz&gt;</div>
<div style="left:364px;top:743px;width:721px;height:23px;background:#fff;border:1px solid #7a7a7a"></div>
<svg style="position:absolute;left:1067px;top:752px" width="11" height="6" viewBox="0 0 11 6"><path d="M0.5,0.5 L5.5,5.5 L10.5,0.5" stroke="#444" fill="none" stroke-width="1"/></svg>
<div class="t" style="left:-23px;width:200px;text-align:center;top:773px;font-size:12px;">F3 Anzeigen</div>
<div class="t" style="left:131px;width:200px;text-align:center;top:773px;font-size:12px;">F4 Bearbeiten</div>
<div style="left:154px;top:771px;width:1px;height:17px;background:#a0a0a0"></div>
<div class="t" style="left:285px;width:200px;text-align:center;top:773px;font-size:12px;">F5 Kopieren</div>
<div style="left:308px;top:771px;width:1px;height:17px;background:#a0a0a0"></div>
<div class="t" style="left:439px;width:200px;text-align:center;top:773px;font-size:12px;">F6 Bewegen</div>
<div style="left:463px;top:771px;width:1px;height:17px;background:#a0a0a0"></div>
<div class="t" style="left:593px;width:200px;text-align:center;top:773px;font-size:12px;">F7 Neuer Ordner</div>
<div style="left:617px;top:771px;width:1px;height:17px;background:#a0a0a0"></div>
<div class="t" style="left:747px;width:200px;text-align:center;top:773px;font-size:12px;">F8 Löschen</div>
<div style="left:771px;top:771px;width:1px;height:17px;background:#a0a0a0"></div>
<div class="t" style="left:905px;width:200px;text-align:center;top:773px;font-size:12px">Alt+F4 E<u>x</u>it</div>
<div style="left:925px;top:771px;width:1px;height:17px;background:#a0a0a0"></div>
<div style="left:184px;top:45px;width:874px;height:620px;box-shadow:0 4px 14px rgba(0,0,0,0.32)"></div>
<div style="left:184px;top:45px;width:874px;height:620px;background:#f0f0f0;border:1px solid #1883d7"></div>
<div style="left:185px;top:46px;width:872px;height:32px;background:#fff"></div>
<svg style="position:absolute;left:193px;top:52px" width="17" height="17" viewBox="0 0 17 17"><rect x="0.5" y="0.5" width="13" height="11" fill="#fff" stroke="#7a8290"/><path d="M1,2.5H13" stroke="#9aa2b0" stroke-width="1"/><rect x="9.5" y="1" width="1" height="1" fill="#7a8290"/><rect x="11.5" y="1" width="1" height="1" fill="#7a8290"/><path d="M4.5,4V11M1.5,5.5H3" stroke="#b0b8c4" stroke-width="1"/><path d="M4.5,8.3 Q9,4.8 13.5,8.3" stroke="#1a1a1a" stroke-width="1.5" fill="none"/><rect x="2.5" y="8" width="13.5" height="8" rx="0.8" fill="#d21e1e"/><rect x="2.5" y="8" width="13.5" height="2" fill="#e85050"/><rect x="2.5" y="14.5" width="13.5" height="1.5" fill="#a01010"/><rect x="5" y="10" width="1.6" height="3" fill="#c8dcdc"/><rect x="11.4" y="10" width="1.6" height="3" fill="#c8dcdc"/></svg>
<div class="t" style="left:214px;top:54px;font-size:12px;">Konsole1 - [Konsolenstamm\Zertifikate - Aktueller Benutzer\Eigene Zertifikate\Zertifikate]</div>
<div style="left:938px;top:60px;width:10px;height:1px;background:#000"></div>
<div style="left:983px;top:55px;width:10px;height:10px;border:1px solid #000"></div>
<svg style="position:absolute;left:1029px;top:55px" width="10" height="10" viewBox="0 0 10 10"><path d="M0,0L10,10M10,0L0,10" stroke="#000" stroke-width="1.1"/></svg>
<div style="left:185px;top:78px;width:872px;height:20px;background:#fff"></div>
<svg style="position:absolute;left:187px;top:79px" width="17" height="17" viewBox="0 0 17 17"><rect x="0.5" y="0.5" width="13" height="11" fill="#fff" stroke="#7a8290"/><path d="M1,2.5H13" stroke="#9aa2b0" stroke-width="1"/><rect x="9.5" y="1" width="1" height="1" fill="#7a8290"/><rect x="11.5" y="1" width="1" height="1" fill="#7a8290"/><path d="M4.5,4V11M1.5,5.5H3" stroke="#b0b8c4" stroke-width="1"/><path d="M4.5,8.3 Q9,4.8 13.5,8.3" stroke="#1a1a1a" stroke-width="1.5" fill="none"/><rect x="2.5" y="8" width="13.5" height="8" rx="0.8" fill="#d21e1e"/><rect x="2.5" y="8" width="13.5" height="2" fill="#e85050"/><rect x="2.5" y="14.5" width="13.5" height="1.5" fill="#a01010"/><rect x="5" y="10" width="1.6" height="3" fill="#c8dcdc"/><rect x="11.4" y="10" width="1.6" height="3" fill="#c8dcdc"/></svg>
<div class="t" style="left:211px;top:80px;font-size:12px;">Datei</div>
<div class="t" style="left:254px;top:80px;font-size:12px;">Aktion</div>
<div class="t" style="left:305px;top:80px;font-size:12px;">Ansicht</div>
<div class="t" style="left:361px;top:80px;font-size:12px;">Favoriten</div>
<div class="t" style="left:426px;top:80px;font-size:12px;">Fenster</div>
<div class="t" style="left:480px;top:80px;font-size:12px;">?</div>
<div style="left:998px;top:77px;width:1px;height:21px;background:#c8c8c8"></div>
<div style="left:1000px;top:78px;width:18px;height:18px;background:#fff;border:1px solid #e3e3e3"></div>
<div style="left:1019px;top:78px;width:18px;height:18px;background:#fff;border:1px solid #e3e3e3"></div>
<div style="left:1038px;top:78px;width:18px;height:18px;background:#fff;border:1px solid #e3e3e3"></div>
<div style="left:1005px;top:89px;width:7px;height:2px;background:#5d6c80"></div>
<svg style="position:absolute;left:1024px;top:83px" width="8" height="8" viewBox="0 0 8 8"><rect x="2.5" y="0.5" width="5" height="4" fill="none" stroke="#5d6c80"/><rect x="0.5" y="3.5" width="5" height="4" fill="#fff" stroke="#5d6c80"/></svg>
<svg style="position:absolute;left:1043px;top:83px" width="8" height="8" viewBox="0 0 8 8"><path d="M1,1L7,7M7,1L1,7" stroke="#5d6c80" stroke-width="1.8"/></svg>
<div style="left:185px;top:98px;width:872px;height:1px;background:#d6d6d6"></div>
<div style="left:185px;top:99px;width:872px;height:22px;background:#fff"></div>
<div style="left:185px;top:121px;width:872px;height:1px;background:#e8e8e8"></div>
<div style="left:264px;top:100px;width:23px;height:21px;background:#cce8ff;border:1px solid #99d1ff"></div>
<div style="left:449px;top:100px;width:23px;height:21px;background:#cce8ff;border:1px solid #99d1ff"></div>
<div style="left:235px;top:102px;width:1px;height:18px;background:#8a8a8a"></div>
<div style="left:289px;top:102px;width:1px;height:18px;background:#8a8a8a"></div>
<div style="left:343px;top:102px;width:1px;height:18px;background:#8a8a8a"></div>
<div style="left:420px;top:102px;width:1px;height:18px;background:#8a8a8a"></div>
<svg style="position:absolute;left:190px;top:104px" width="16" height="15" viewBox="0 0 16 15"><path d="M0.5,7.5 L7,1 V4.5 H15.5 V10.5 H7 V14Z" fill="#30a8f0" stroke="#1878c8"/><path d="M7,5.5 H15 V7.5 H7Z" fill="#8fd8ff" opacity="0.7"/></svg>
<svg style="position:absolute;left:213px;top:104px" width="16" height="15" viewBox="0 0 16 15"><path d="M15.5,7.5 L9,1 V4.5 H0.5 V10.5 H9 V14Z" fill="#8a8a8a" stroke="#5a5a5a"/><path d="M1,5.5 H9 V7.5 H1Z" fill="#c8c8c8" opacity="0.7"/></svg>
<svg style="position:absolute;left:244px;top:104px" width="16" height="15" viewBox="0 0 16 15"><path d="M0.5,4.5 H6 L7,3 H15.5 V14.5 H0.5Z" fill="#f5d580" stroke="#c09040"/><path d="M3,13 Q5,7 9,5 L8,3 L13,4 L11,8 L10,6.5 Q7,8 5,13Z" fill="#40b020"/></svg>
<svg style="position:absolute;left:268px;top:104px" width="16" height="15" viewBox="0 0 16 15"><rect x="0.5" y="0.5" width="15" height="14" fill="#fff" stroke="#707070"/><rect x="1" y="1" width="14" height="2" fill="#aaa"/><rect x="2" y="5" width="3" height="1.2" fill="#5a7ab0"/><rect x="2" y="8" width="3" height="1.2" fill="#5a7ab0"/><rect x="2" y="11" width="3" height="1.2" fill="#5a7ab0"/><path d="M6.5,4 V14" stroke="#888"/><path d="M12,6 L9,9 L12,12Z" fill="#30b030"/></svg>
<svg style="position:absolute;left:300px;top:103px" width="13" height="17" viewBox="0 0 13 17"><path d="M6.5,10 L5.5,0.5" stroke="#6a7080" stroke-width="1.3"/><path d="M6,10 L12,1" stroke="#7a8aa0" stroke-width="1.4" stroke-dasharray="1.2,0.8"/><ellipse cx="3.5" cy="12" rx="2" ry="3" transform="rotate(35 3.5 12)" fill="#fff" stroke="#1a8ef0" stroke-width="1.6"/><ellipse cx="7.5" cy="13" rx="1.6" ry="3" fill="#fff" stroke="#1a8ef0" stroke-width="1.6"/></svg>
<svg style="position:absolute;left:321px;top:103px" width="17" height="16" viewBox="0 0 17 16"><path d="M0.5,0.5 H6.5 L8.5,2.5 V11.5 H0.5Z" fill="#fff" stroke="#8a8a8a"/><path d="M6.5,4.5 H12.5 L15.5,7.5 V15.5 H6.5Z" fill="#fff" stroke="#8a8a8a"/><g shape-rendering="crispEdges" stroke="#4a80d8" stroke-width="1"><path d="M2,4.5H4M2,6.5H6M2,8.5H6M8,8.5H10M8,10.5H14M8,12.5H14"/></g></svg>
<svg style="position:absolute;left:351px;top:103px" width="17" height="16" viewBox="0 0 17 16"><path d="M2,2 L15,15 M15,2 L2,15" stroke="#e01818" stroke-width="3.6" stroke-linecap="round"/></svg>
<svg style="position:absolute;left:375px;top:104px" width="15" height="16" viewBox="0 0 15 16"><rect x="0.5" y="0.5" width="14" height="15" rx="1" fill="#f4f4f4" stroke="#7a7a7a"/><rect x="2" y="2" width="11" height="3" fill="#fff" stroke="#999" stroke-width="0.6"/><rect x="2.5" y="6.5" width="10" height="6" fill="#fff" stroke="#888" stroke-width="0.7"/><path d="M4,8.5H11M4,10.5H11" stroke="#3a80d0" stroke-width="0.8"/><rect x="6" y="13.5" width="4" height="2" fill="#20a0e8"/></svg>
<svg style="position:absolute;left:398px;top:104px" width="17" height="16" viewBox="0 0 17 16"><path d="M0.5,0.5 H9 L12.5,4 V15.5 H0.5Z" fill="#fffbe0" stroke="#8a8a8a"/><path d="M2.5,5H3.5M5,5H9M2.5,8H3.5M5,8H8M2.5,11H3.5M5,11H8" stroke="#333" stroke-width="0.8"/><path d="M8,8.5H12V6L16,10L12,14V11.5H8Z" fill="#40c040" stroke="#209020" stroke-width="0.6"/></svg>
<svg style="position:absolute;left:430px;top:103px" width="14" height="17" viewBox="0 0 14 17"><rect x="0.5" y="0.5" width="13" height="16" fill="#2040a8" stroke="#102070"/><text x="3" y="13.5" font-size="13" font-weight="bold" fill="#fff" font-family="Liberation Sans">?</text></svg>
<svg style="position:absolute;left:452px;top:104px" width="16" height="15" viewBox="0 0 16 15"><rect x="0.5" y="0.5" width="15" height="14" fill="#fff" stroke="#707070"/><rect x="1" y="1" width="14" height="2" fill="#aaa"/><rect x="11" y="5" width="3" height="1.2" fill="#5a7ab0"/><rect x="11" y="8" width="3" height="1.2" fill="#5a7ab0"/><rect x="11" y="11" width="3" height="1.2" fill="#5a7ab0"/><path d="M9.5,4 V14" stroke="#888"/><path d="M4,6 L7,9 L4,12Z" fill="#30b030"/></svg>
<div style="left:185px;top:122px;width:872px;height:519px;background:#f0f0f0"></div>
<div style="left:185px;top:128px;width:283px;height:513px;background:#fff;border:1px solid #828790"></div>
<svg style="position:absolute;left:191px;top:132px" width="15" height="13" viewBox="0 0 15 13"><path d="M0.5,1.5 H5.5 L6.5,0.5 H13.5 V12.5 H0.5Z" fill="#f7dc8e" stroke="#c8a850" stroke-width="1"/><path d="M1,3 H14" stroke="#fff3c8" stroke-width="1"/><rect x="8" y="1" width="4" height="1.3" fill="#5aa0e0"/></svg>
<div class="t" style="left:212px;top:132px;font-size:12px;">Konsolenstamm</div>
<svg style="position:absolute;left:193px;top:155px" width="9" height="6" viewBox="0 0 9 6"><path d="M0.7,0.7 L4.5,4.5 L8.3,0.7" stroke="#3c3c3c" fill="none" stroke-width="1.8"/></svg>
<svg style="position:absolute;left:209px;top:149px" width="16" height="16" viewBox="0 0 16 16"><rect x="4.5" y="0.5" width="11" height="9" fill="#fff" stroke="#8a7a60"/><rect x="0.5" y="3.5" width="12" height="9" fill="#f8f8f8" stroke="#8a7a60"/><path d="M2.5,6.5H9M4,8.5H8" stroke="#7a8ad0" stroke-width="0.8"/><circle cx="9" cy="11" r="2.4" fill="#f0b020" stroke="#c08010" stroke-width="0.6"/><path d="M7.5,13 L7,16 L9,14.5 L11,16 L10.5,13" fill="#2a6ae0"/></svg>
<div class="t" style="left:230px;top:150px;font-size:12px;">Zertifikate - Aktueller Benutzer</div>
<svg style="position:absolute;left:212px;top:173px" width="9" height="6" viewBox="0 0 9 6"><path d="M0.7,0.7 L4.5,4.5 L8.3,0.7" stroke="#3c3c3c" fill="none" stroke-width="1.8"/></svg>
<svg style="position:absolute;left:229px;top:168px" width="15" height="13" viewBox="0 0 15 13"><path d="M0.5,1.5 H5.5 L6.5,0.5 H13.5 V12.5 H0.5Z" fill="#f7dc8e" stroke="#c8a850" stroke-width="1"/><path d="M1,3 H14" stroke="#fff3c8" stroke-width="1"/><rect x="8" y="1" width="4" height="1.3" fill="#5aa0e0"/></svg>
<div class="t" style="left:249px;top:168px;font-size:12px;">Eigene Zertifikate</div>
<div style="left:245px;top:184px;width:80px;height:18px;background:#d9d9d9"></div>
<svg style="position:absolute;left:248px;top:186px" width="15" height="13" viewBox="0 0 15 13"><path d="M0.5,1.5 H5.5 L6.5,0.5 H13.5 V12.5 H0.5Z" fill="#f7dc8e" stroke="#c8a850" stroke-width="1"/><path d="M1,3 H14" stroke="#fff3c8" stroke-width="1"/><rect x="8" y="1" width="4" height="1.3" fill="#5aa0e0"/></svg>
<div class="t" style="left:268px;top:186px;font-size:12px;">Zertifikate</div>
<div style="left:186px;top:129px;width:281px;height:494px;overflow:hidden">
</div>
<svg style="position:absolute;left:214px;top:208px" width="6" height="9" viewBox="0 0 6 9"><path d="M0.7,0.7 L4.5,4.5 L0.7,8.3" stroke="#a6a6a6" fill="none" stroke-width="1.8"/></svg>
<svg style="position:absolute;left:229px;top:204px" width="15" height="13" viewBox="0 0 15 13"><path d="M0.5,1.5 H5.5 L6.5,0.5 H13.5 V12.5 H0.5Z" fill="#f7dc8e" stroke="#c8a850" stroke-width="1"/><path d="M1,3 H14" stroke="#fff3c8" stroke-width="1"/><rect x="8" y="1" width="4" height="1.3" fill="#5aa0e0"/></svg>
<div class="t" style="left:249px;top:204px;width:217px;overflow:hidden">Vertrauenswürdige Stammzertifizierungsstellen</div>
<svg style="position:absolute;left:214px;top:226px" width="6" height="9" viewBox="0 0 6 9"><path d="M0.7,0.7 L4.5,4.5 L0.7,8.3" stroke="#a6a6a6" fill="none" stroke-width="1.8"/></svg>
<svg style="position:absolute;left:229px;top:222px" width="15" height="13" viewBox="0 0 15 13"><path d="M0.5,1.5 H5.5 L6.5,0.5 H13.5 V12.5 H0.5Z" fill="#f7dc8e" stroke="#c8a850" stroke-width="1"/><path d="M1,3 H14" stroke="#fff3c8" stroke-width="1"/><rect x="8" y="1" width="4" height="1.3" fill="#5aa0e0"/></svg>
<div class="t" style="left:249px;top:222px;width:217px;overflow:hidden">Organisationsvertrauen</div>
<svg style="position:absolute;left:214px;top:244px" width="6" height="9" viewBox="0 0 6 9"><path d="M0.7,0.7 L4.5,4.5 L0.7,8.3" stroke="#a6a6a6" fill="none" stroke-width="1.8"/></svg>
<svg style="position:absolute;left:229px;top:240px" width="15" height="13" viewBox="0 0 15 13"><path d="M0.5,1.5 H5.5 L6.5,0.5 H13.5 V12.5 H0.5Z" fill="#f7dc8e" stroke="#c8a850" stroke-width="1"/><path d="M1,3 H14" stroke="#fff3c8" stroke-width="1"/><rect x="8" y="1" width="4" height="1.3" fill="#5aa0e0"/></svg>
<div class="t" style="left:249px;top:240px;width:217px;overflow:hidden">Zwischenzertifizierungsstellen</div>
<svg style="position:absolute;left:214px;top:262px" width="6" height="9" viewBox="0 0 6 9"><path d="M0.7,0.7 L4.5,4.5 L0.7,8.3" stroke="#a6a6a6" fill="none" stroke-width="1.8"/></svg>
<svg style="position:absolute;left:229px;top:258px" width="15" height="13" viewBox="0 0 15 13"><path d="M0.5,1.5 H5.5 L6.5,0.5 H13.5 V12.5 H0.5Z" fill="#f7dc8e" stroke="#c8a850" stroke-width="1"/><path d="M1,3 H14" stroke="#fff3c8" stroke-width="1"/><rect x="8" y="1" width="4" height="1.3" fill="#5aa0e0"/></svg>
<div class="t" style="left:249px;top:258px;width:217px;overflow:hidden">Active Directory-Benutzerobjekt</div>
<svg style="position:absolute;left:214px;top:280px" width="6" height="9" viewBox="0 0 6 9"><path d="M0.7,0.7 L4.5,4.5 L0.7,8.3" stroke="#a6a6a6" fill="none" stroke-width="1.8"/></svg>
<svg style="position:absolute;left:229px;top:276px" width="15" height="13" viewBox="0 0 15 13"><path d="M0.5,1.5 H5.5 L6.5,0.5 H13.5 V12.5 H0.5Z" fill="#f7dc8e" stroke="#c8a850" stroke-width="1"/><path d="M1,3 H14" stroke="#fff3c8" stroke-width="1"/><rect x="8" y="1" width="4" height="1.3" fill="#5aa0e0"/></svg>
<div class="t" style="left:249px;top:276px;width:217px;overflow:hidden">Vertrauenswürdige Herausgeber</div>
<svg style="position:absolute;left:214px;top:298px" width="6" height="9" viewBox="0 0 6 9"><path d="M0.7,0.7 L4.5,4.5 L0.7,8.3" stroke="#a6a6a6" fill="none" stroke-width="1.8"/></svg>
<svg style="position:absolute;left:229px;top:294px" width="15" height="13" viewBox="0 0 15 13"><path d="M0.5,1.5 H5.5 L6.5,0.5 H13.5 V12.5 H0.5Z" fill="#f7dc8e" stroke="#c8a850" stroke-width="1"/><path d="M1,3 H14" stroke="#fff3c8" stroke-width="1"/><rect x="8" y="1" width="4" height="1.3" fill="#5aa0e0"/></svg>
<div class="t" style="left:249px;top:294px;width:217px;overflow:hidden">Nicht vertrauenswürdige Zertifikate</div>
<svg style="position:absolute;left:214px;top:316px" width="6" height="9" viewBox="0 0 6 9"><path d="M0.7,0.7 L4.5,4.5 L0.7,8.3" stroke="#a6a6a6" fill="none" stroke-width="1.8"/></svg>
<svg style="position:absolute;left:229px;top:312px" width="15" height="13" viewBox="0 0 15 13"><path d="M0.5,1.5 H5.5 L6.5,0.5 H13.5 V12.5 H0.5Z" fill="#f7dc8e" stroke="#c8a850" stroke-width="1"/><path d="M1,3 H14" stroke="#fff3c8" stroke-width="1"/><rect x="8" y="1" width="4" height="1.3" fill="#5aa0e0"/></svg>
<div class="t" style="left:249px;top:312px;width:217px;overflow:hidden">Drittanbieter-Stammzertifizierungsstellen</div>
<svg style="position:absolute;left:214px;top:334px" width="6" height="9" viewBox="0 0 6 9"><path d="M0.7,0.7 L4.5,4.5 L0.7,8.3" stroke="#a6a6a6" fill="none" stroke-width="1.8"/></svg>
<svg style="position:absolute;left:229px;top:330px" width="15" height="13" viewBox="0 0 15 13"><path d="M0.5,1.5 H5.5 L6.5,0.5 H13.5 V12.5 H0.5Z" fill="#f7dc8e" stroke="#c8a850" stroke-width="1"/><path d="M1,3 H14" stroke="#fff3c8" stroke-width="1"/><rect x="8" y="1" width="4" height="1.3" fill="#5aa0e0"/></svg>
<div class="t" style="left:249px;top:330px;width:217px;overflow:hidden">Vertrauenswürdige Personen</div>
<svg style="position:absolute;left:214px;top:352px" width="6" height="9" viewBox="0 0 6 9"><path d="M0.7,0.7 L4.5,4.5 L0.7,8.3" stroke="#a6a6a6" fill="none" stroke-width="1.8"/></svg>
<svg style="position:absolute;left:229px;top:348px" width="15" height="13" viewBox="0 0 15 13"><path d="M0.5,1.5 H5.5 L6.5,0.5 H13.5 V12.5 H0.5Z" fill="#f7dc8e" stroke="#c8a850" stroke-width="1"/><path d="M1,3 H14" stroke="#fff3c8" stroke-width="1"/><rect x="8" y="1" width="4" height="1.3" fill="#5aa0e0"/></svg>
<div class="t" style="left:249px;top:348px;width:217px;overflow:hidden">Clientauthentifizierungsaussteller</div>
<svg style="position:absolute;left:214px;top:370px" width="6" height="9" viewBox="0 0 6 9"><path d="M0.7,0.7 L4.5,4.5 L0.7,8.3" stroke="#a6a6a6" fill="none" stroke-width="1.8"/></svg>
<svg style="position:absolute;left:229px;top:366px" width="15" height="13" viewBox="0 0 15 13"><path d="M0.5,1.5 H5.5 L6.5,0.5 H13.5 V12.5 H0.5Z" fill="#f7dc8e" stroke="#c8a850" stroke-width="1"/><path d="M1,3 H14" stroke="#fff3c8" stroke-width="1"/><rect x="8" y="1" width="4" height="1.3" fill="#5aa0e0"/></svg>
<div class="t" style="left:249px;top:366px;width:217px;overflow:hidden">Andere Personen</div>
<svg style="position:absolute;left:214px;top:388px" width="6" height="9" viewBox="0 0 6 9"><path d="M0.7,0.7 L4.5,4.5 L0.7,8.3" stroke="#a6a6a6" fill="none" stroke-width="1.8"/></svg>
<svg style="position:absolute;left:229px;top:384px" width="15" height="13" viewBox="0 0 15 13"><path d="M0.5,1.5 H5.5 L6.5,0.5 H13.5 V12.5 H0.5Z" fill="#f7dc8e" stroke="#c8a850" stroke-width="1"/><path d="M1,3 H14" stroke="#fff3c8" stroke-width="1"/><rect x="8" y="1" width="4" height="1.3" fill="#5aa0e0"/></svg>
<div class="t" style="left:249px;top:384px;width:217px;overflow:hidden">Local NonRemovable Certificates</div>
<svg style="position:absolute;left:214px;top:406px" width="6" height="9" viewBox="0 0 6 9"><path d="M0.7,0.7 L4.5,4.5 L0.7,8.3" stroke="#a6a6a6" fill="none" stroke-width="1.8"/></svg>
<svg style="position:absolute;left:229px;top:402px" width="15" height="13" viewBox="0 0 15 13"><path d="M0.5,1.5 H5.5 L6.5,0.5 H13.5 V12.5 H0.5Z" fill="#f7dc8e" stroke="#c8a850" stroke-width="1"/><path d="M1,3 H14" stroke="#fff3c8" stroke-width="1"/><rect x="8" y="1" width="4" height="1.3" fill="#5aa0e0"/></svg>
<div class="t" style="left:249px;top:402px;width:217px;overflow:hidden">MSIEHistoryJournal</div>
<svg style="position:absolute;left:214px;top:424px" width="6" height="9" viewBox="0 0 6 9"><path d="M0.7,0.7 L4.5,4.5 L0.7,8.3" stroke="#a6a6a6" fill="none" stroke-width="1.8"/></svg>
<svg style="position:absolute;left:229px;top:420px" width="15" height="13" viewBox="0 0 15 13"><path d="M0.5,1.5 H5.5 L6.5,0.5 H13.5 V12.5 H0.5Z" fill="#f7dc8e" stroke="#c8a850" stroke-width="1"/><path d="M1,3 H14" stroke="#fff3c8" stroke-width="1"/><rect x="8" y="1" width="4" height="1.3" fill="#5aa0e0"/></svg>
<div class="t" style="left:249px;top:420px;width:217px;overflow:hidden">Zertifikatregistrierungsanforderungen</div>
<svg style="position:absolute;left:214px;top:442px" width="6" height="9" viewBox="0 0 6 9"><path d="M0.7,0.7 L4.5,4.5 L0.7,8.3" stroke="#a6a6a6" fill="none" stroke-width="1.8"/></svg>
<svg style="position:absolute;left:229px;top:438px" width="15" height="13" viewBox="0 0 15 13"><path d="M0.5,1.5 H5.5 L6.5,0.5 H13.5 V12.5 H0.5Z" fill="#f7dc8e" stroke="#c8a850" stroke-width="1"/><path d="M1,3 H14" stroke="#fff3c8" stroke-width="1"/><rect x="8" y="1" width="4" height="1.3" fill="#5aa0e0"/></svg>
<div class="t" style="left:249px;top:438px;width:217px;overflow:hidden">Smartcard vertrauenswürdige Stämme</div>
<div style="left:186px;top:623px;width:280px;height:16px;background:#f0f0f0"></div>
<div style="left:204px;top:623px;width:221px;height:15px;background:#cdcdcd"></div>
<svg style="position:absolute;left:192px;top:627px" width="6" height="8" viewBox="0 0 6 8"><path d="M5,0.5 L1,4 L5,7.5" stroke="#606060" fill="none" stroke-width="2"/></svg>
<svg style="position:absolute;left:455px;top:627px" width="6" height="8" viewBox="0 0 6 8"><path d="M1,0.5 L5,4 L1,7.5" stroke="#606060" fill="none" stroke-width="2"/></svg>
<div style="left:471px;top:128px;width:300px;height:513px;background:#fff;border:1px solid #828790"></div>
<div class="t" style="left:479px;top:135px;font-size:12px;">Ausgestellt für</div>
<svg style="position:absolute;left:570px;top:130px" width="8" height="5" viewBox="0 0 8 5"><path d="M0.5,4.5 L4,1 L7.5,4.5" stroke="#888" fill="none" stroke-width="1"/></svg>
<div style="left:672px;top:131px;width:1px;height:23px;background:#e5e5e5"></div>
<div class="t" style="left:679px;top:135px;font-size:12px;">Ausgestellt von</div>
<svg width="0" height="0" style="position:absolute"><defs><pattern id="dither" width="2" height="2" patternUnits="userSpaceOnUse"><rect width="1" height="1" fill="#0078d7"/><rect x="1" y="1" width="1" height="1" fill="#0078d7"/></pattern></defs></svg>
<div style="left:472px;top:154px;width:298px;height:469px;overflow:hidden">
<div class="t" style="left:23px;top:3px;letter-spacing:-0.2px;">DigiCert Assured ID Root CA</div>
<div class="t" style="left:207px;top:3px;letter-spacing:-0.2px;">DigiCert Assured ID Root CA</div>
<div class="t" style="left:23px;top:22px;letter-spacing:-0.2px;">DigiCert SHA2 Assured ID CA</div>
<div class="t" style="left:207px;top:22px;letter-spacing:-0.2px;">DigiCert Assured ID Root CA</div>
<div class="t" style="left:23px;top:41px;letter-spacing:-0.2px;">eshop.kozel.cz</div>
<div class="t" style="left:207px;top:41px;letter-spacing:-0.2px;">RapidSSL RSA CA 2018</div>
<div style="left:21px;top:57px;width:280px;height:19px;background:#0078d7"></div>
<div class="t" style="left:23px;top:60px;letter-spacing:-0.2px;color:#fff">Jindřich Zechmeister</div>
<div class="t" style="left:207px;top:60px;letter-spacing:-0.2px;color:#fff">DigiCert SHA2 Assured ID CA</div>
<div class="t" style="left:23px;top:79px;letter-spacing:-0.2px;">Petra Salaquardová</div>
<div class="t" style="left:207px;top:79px;letter-spacing:-0.2px;">DigiCert SHA2 Assured ID CA</div>
<div class="t" style="left:23px;top:98px;letter-spacing:-0.2px;">planzer.cz</div>
<div class="t" style="left:207px;top:98px;letter-spacing:-0.2px;">RapidSSL RSA CA 2018</div>
</div>
<svg style="position:absolute;left:477px;top:157px" width="16" height="16" viewBox="0 0 16 16"><rect x="0.5" y="0.5" width="15" height="11" fill="#fafafa" stroke="#8a7a60"/><path d="M2.5,3.5H10M5,5.5H9M2.5,7.5H5" stroke="#7a8ad0" stroke-width="0.8"/><circle cx="10.5" cy="9.5" r="2.6" fill="#f0b020" stroke="#c08010" stroke-width="0.6"/><path d="M9,11.5 L8.5,14 L10.5,12.7 L12.5,14 L12,11.5" fill="#2a6ae0"/></svg>
<svg style="position:absolute;left:477px;top:176px" width="16" height="16" viewBox="0 0 16 16"><rect x="0.5" y="0.5" width="15" height="11" fill="#fafafa" stroke="#8a7a60"/><path d="M2.5,3.5H10M5,5.5H9M2.5,7.5H5" stroke="#7a8ad0" stroke-width="0.8"/><circle cx="10.5" cy="9.5" r="2.6" fill="#f0b020" stroke="#c08010" stroke-width="0.6"/><path d="M9,11.5 L8.5,14 L10.5,12.7 L12.5,14 L12,11.5" fill="#2a6ae0"/></svg>
<svg style="position:absolute;left:477px;top:195px" width="16" height="16" viewBox="0 0 16 16"><rect x="2.5" y="1.5" width="13" height="10" fill="#fafafa" stroke="#8a7a60"/><path d="M6,4.5H12M7,6.5H11M6,8.5H8" stroke="#9aa6d8" stroke-width="0.8"/><circle cx="10.5" cy="10" r="2.6" fill="#f0b020" stroke="#c08010" stroke-width="0.6"/><path d="M9,12 L8.5,14.5 L10.5,13.2 L12.5,14.5 L12,12" fill="#2a6ae0"/><circle cx="3.2" cy="2.6" r="2.3" fill="#f4c848" stroke="#a07010" stroke-width="0.8"/><circle cx="3.2" cy="2.4" r="0.7" fill="#fff"/><path d="M3.5,4.8V11.5M3.5,8.5H5.5M3.5,10.5H5" stroke="#a07010" stroke-width="1.1"/></svg>
<svg style="position:absolute;left:477px;top:214px" width="16" height="16" viewBox="0 0 16 16"><rect x="2.5" y="1.5" width="13" height="10" fill="#fafafa" stroke="#8a7a60"/><path d="M6,4.5H12M7,6.5H11M6,8.5H8" stroke="#9aa6d8" stroke-width="0.8"/><circle cx="10.5" cy="10" r="2.6" fill="#f0b020" stroke="#c08010" stroke-width="0.6"/><path d="M9,12 L8.5,14.5 L10.5,13.2 L12.5,14.5 L12,12" fill="#2a6ae0"/><circle cx="3.2" cy="2.6" r="2.3" fill="#f4c848" stroke="#a07010" stroke-width="0.8"/><circle cx="3.2" cy="2.4" r="0.7" fill="#fff"/><path d="M3.5,4.8V11.5M3.5,8.5H5.5M3.5,10.5H5" stroke="#a07010" stroke-width="1.1"/><rect x="0" y="0" width="16" height="12" fill="url(#dither)"/><rect x="8" y="12" width="5" height="3" fill="url(#dither)"/></svg>
<svg style="position:absolute;left:477px;top:233px" width="16" height="16" viewBox="0 0 16 16"><rect x="2.5" y="1.5" width="13" height="10" fill="#fafafa" stroke="#8a7a60"/><path d="M6,4.5H12M7,6.5H11M6,8.5H8" stroke="#9aa6d8" stroke-width="0.8"/><circle cx="10.5" cy="10" r="2.6" fill="#f0b020" stroke="#c08010" stroke-width="0.6"/><path d="M9,12 L8.5,14.5 L10.5,13.2 L12.5,14.5 L12,12" fill="#2a6ae0"/><circle cx="3.2" cy="2.6" r="2.3" fill="#f4c848" stroke="#a07010" stroke-width="0.8"/><circle cx="3.2" cy="2.4" r="0.7" fill="#fff"/><path d="M3.5,4.8V11.5M3.5,8.5H5.5M3.5,10.5H5" stroke="#a07010" stroke-width="1.1"/></svg>
<svg style="position:absolute;left:477px;top:252px" width="16" height="16" viewBox="0 0 16 16"><rect x="2.5" y="1.5" width="13" height="10" fill="#fafafa" stroke="#8a7a60"/><path d="M6,4.5H12M7,6.5H11M6,8.5H8" stroke="#9aa6d8" stroke-width="0.8"/><circle cx="10.5" cy="10" r="2.6" fill="#f0b020" stroke="#c08010" stroke-width="0.6"/><path d="M9,12 L8.5,14.5 L10.5,13.2 L12.5,14.5 L12,12" fill="#2a6ae0"/><circle cx="3.2" cy="2.6" r="2.3" fill="#f4c848" stroke="#a07010" stroke-width="0.8"/><circle cx="3.2" cy="2.4" r="0.7" fill="#fff"/><path d="M3.5,4.8V11.5M3.5,8.5H5.5M3.5,10.5H5" stroke="#a07010" stroke-width="1.1"/></svg>
<div style="left:472px;top:623px;width:298px;height:16px;background:#f0f0f0"></div>
<div style="left:490px;top:623px;width:86px;height:15px;background:#cdcdcd"></div>
<svg style="position:absolute;left:478px;top:627px" width="6" height="8" viewBox="0 0 6 8"><path d="M5,0.5 L1,4 L5,7.5" stroke="#606060" fill="none" stroke-width="2"/></svg>
<svg style="position:absolute;left:758px;top:627px" width="6" height="8" viewBox="0 0 6 8"><path d="M1,0.5 L5,4 L1,7.5" stroke="#606060" fill="none" stroke-width="2"/></svg>
<div style="left:774px;top:128px;width:283px;height:513px;background:#fff;border-style:solid;border-width:2px 1px 1px 2px;border-color:#6a6a6a #f0f0f0 #f0f0f0 #6a6a6a"></div>
<div style="left:776px;top:130px;width:280px;height:21px;background:#f0f0f0;border-bottom:1px solid #a0a0a0"></div>
<div class="t" style="left:781px;top:134px;font-size:12px;font-weight:bold">Aktionen</div>
<div style="left:776px;top:151px;width:280px;height:26px;background:linear-gradient(#bed3eb,#a3bcd8)"></div>
<div class="t" style="left:783px;top:157px;font-size:12px;">Zertifikate</div>
<svg style="position:absolute;left:1039px;top:162px" width="10" height="5" viewBox="0 0 10 5"><path d="M0,5 L5,0 L10,5Z" fill="#000"/></svg>
<div class="t" style="left:807px;top:182px;font-size:12px;">Weitere Aktionen</div>
<svg style="position:absolute;left:1042px;top:184px" width="6" height="9" viewBox="0 0 6 9"><path d="M0,0 L6,4.5 L0,9Z" fill="#000"/></svg>
<div style="left:776px;top:206px;width:280px;height:25px;background:linear-gradient(#bed3eb,#a3bcd8)"></div>
<div class="t" style="left:783px;top:212px;font-size:12px;">Jindřich Zechmeister</div>
<svg style="position:absolute;left:1039px;top:217px" width="10" height="5" viewBox="0 0 10 5"><path d="M0,5 L5,0 L10,5Z" fill="#000"/></svg>
<div class="t" style="left:807px;top:236px;font-size:12px;">Weitere Aktionen</div>
<svg style="position:absolute;left:1042px;top:238px" width="6" height="9" viewBox="0 0 6 9"><path d="M0,0 L6,4.5 L0,9Z" fill="#000"/></svg>
<div style="left:185px;top:641px;width:872px;height:23px;background:#f0f0f0"></div>
<div class="t" style="left:188px;top:647px;font-size:12px;">Exportiert ein Zertifikat.</div>
<div style="left:836px;top:644px;width:1px;height:18px;background:#d9d9d9"></div>
<div style="left:969px;top:644px;width:1px;height:18px;background:#d9d9d9"></div>
<div style="left:1054px;top:644px;width:1px;height:18px;background:#d9d9d9"></div>
<div style="left:543px;top:217px;width:165px;height:188px;box-shadow:2px 2px 3px rgba(0,0,0,0.25)"></div>
<div style="left:543px;top:217px;width:165px;height:188px;background:#f0f0f0;border:1px solid #cccccc"></div>
<div style="left:546px;top:249px;width:156px;height:22px;background:#91c9f7"></div>
<div style="left:574px;top:245px;width:130px;height:1px;background:#d7d7d7"></div>
<div style="left:574px;top:274px;width:130px;height:1px;background:#d7d7d7"></div>
<div style="left:574px;top:347px;width:130px;height:1px;background:#d7d7d7"></div>
<div style="left:574px;top:376px;width:130px;height:1px;background:#d7d7d7"></div>
<div class="t" style="left:578px;top:224px;font-size:12px;">Öffnen</div>
<div class="t" style="left:578px;top:253px;font-size:12px;">Alle Aufgaben</div>
<div class="t" style="left:578px;top:282px;font-size:12px;">Ausschneiden</div>
<div class="t" style="left:578px;top:304px;font-size:12px;">Kopieren</div>
<div class="t" style="left:578px;top:326px;font-size:12px;">Löschen</div>
<div class="t" style="left:578px;top:355px;font-size:12px;">Eigenschaften</div>
<div class="t" style="left:578px;top:384px;font-size:12px;">Hilfe</div>
<svg style="position:absolute;left:691px;top:256px" width="5" height="8" viewBox="0 0 5 8"><path d="M0.5,0.5 L4,4 L0.5,7.5" stroke="#333" fill="none" stroke-width="1.1"/></svg>
<div style="left:703px;top:246px;width:312px;height:137px;box-shadow:2px 2px 3px rgba(0,0,0,0.25)"></div>
<div style="left:703px;top:246px;width:312px;height:137px;background:#f0f0f0;border:1px solid #cccccc"></div>
<div style="left:706px;top:358px;width:306px;height:22px;background:#91c9f7"></div>
<div style="left:733px;top:274px;width:279px;height:1px;background:#d7d7d7"></div>
<div style="left:733px;top:325px;width:279px;height:1px;background:#d7d7d7"></div>
<div style="left:733px;top:354px;width:279px;height:1px;background:#d7d7d7"></div>
<div class="t" style="left:737px;top:253px;font-size:12px;">Öffnen</div>
<div class="t" style="left:737px;top:282px;font-size:12px;">Zertifikat mit neuem Schlüssel anfordern...</div>
<div class="t" style="left:737px;top:304px;font-size:12px;">Zertifikat mit neuem Schlüssel erneuern...</div>
<div class="t" style="left:737px;top:333px;font-size:12px;">Erweiterte Vorgänge</div>
<div class="t" style="left:737px;top:362px;font-size:12px;">Exportieren...</div>
<svg style="position:absolute;left:998px;top:336px" width="5" height="8" viewBox="0 0 5 8"><path d="M0.5,0.5 L4,4 L0.5,7.5" stroke="#333" fill="none" stroke-width="1.1"/></svg>
</body></html>
